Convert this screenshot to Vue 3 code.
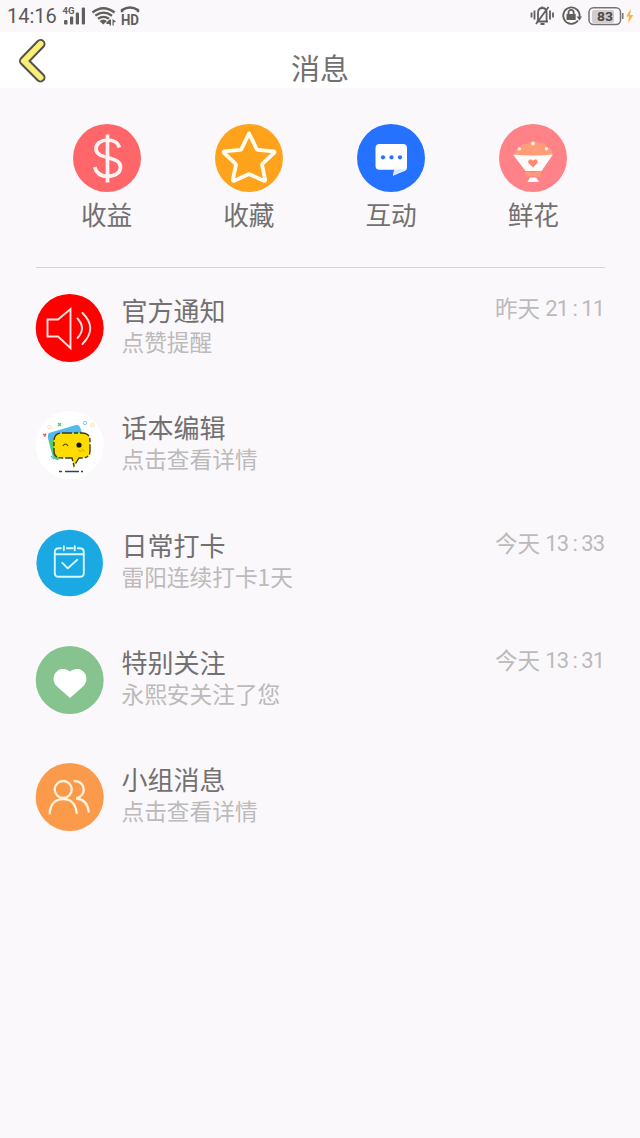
<script setup>
const shortcuts = [
  { id: 'income', label: '收益', color: '#ff6669' },
  { id: 'favorite', label: '收藏', color: '#ffa31c' },
  { id: 'interact', label: '互动', color: '#2472ff' },
  { id: 'flower', label: '鲜花', color: '#ff8288' },
]
const messages = [
  { id: 'notice', title: '官方通知', detail: '点赞提醒', day: '昨天', h: '21', m: '11', color: '#fe0000' },
  { id: 'editor', title: '话本编辑', detail: '点击查看详情', color: '#ffffff' },
  { id: 'daily', title: '日常打卡', detail: '雷阳连续打卡1天', day: '今天', h: '13', m: '33', color: '#1ba9e4' },
  { id: 'follow', title: '特别关注', detail: '永熙安关注了您', day: '今天', h: '13', m: '31', color: '#87c38f' },
  { id: 'group', title: '小组消息', detail: '点击查看详情', color: '#fb9a4b' },
]
</script>

<template>
  <div class="screen">
    <div class="status">
      <span class="clock">14:16</span>
      <svg class="status-left" width="80" height="32" viewBox="60 0 80 32">
        <text x="62.500" y="14" font-size="8.500" font-weight="700" textLength="12" lengthAdjust="spacingAndGlyphs" fill="#625e5e">4G</text>
        <g fill="#625e5e">
          <rect x="64" y="20" width="3.500" height="4.500" rx="1" />
          <rect x="70" y="16.500" width="3.200" height="8" rx="1" />
          <rect x="75.800" y="12.500" width="3.200" height="12" rx="1" />
          <rect x="81.800" y="7.500" width="3.200" height="17" rx="1" />
          <path d="M99.500 21 Q103.500 18 107 21 L103.300 24.500Z" />
          <path d="M111 19.500v6h-1.400v-1.600h-3.200v-1.400l3.200-3zM112.500 19v6.500h1.200v-3l2.300-1z" />
        </g>
        <g fill="none" stroke="#625e5e" stroke-width="2.300">
          <path d="M92.500 12.500Q103.500 4 114.500 12.500M95.300 15.700Q103.500 9.500 112 15.700M98 18.800Q103.500 15 109 18.800" />
          <path d="M122 12.300v-2.200Q130 5 138 10.100v2.200" stroke-width="2.500" />
        </g>
        <text x="121" y="24.800" font-size="14.500" font-weight="700" textLength="18" lengthAdjust="spacingAndGlyphs" fill="#625e5e">HD</text>
      </svg>
      <svg class="status-right" width="110" height="32" viewBox="530 0 110 32">
        <g fill="none" stroke="#625e5e" stroke-width="1.800">
          <path d="M531.500 12.500v5M534.500 10.500v9M550 10.500v9M553 12.500v5" />
          <path d="M536.500 21.500h11.500M538 21v-8q0-5 4.300-5t4.300 5v8M542.300 8V6.500M540.500 24h4M536 24L548.500 7" />
          <path d="M578 20.500A8.200 8.200 0 1 1 579.500 17" />
          <path d="M568.500 15v-2.500a2.600 2.600 0 0 1 5.200 0V15" />
        </g>
        <path d="M566.500 14h9.200v6h-9.200zM576.500 16.500h5.500l-2.500 4z" fill="#625e5e" />
        <rect x="592" y="10" width="22" height="13" rx="2" fill="#d1cecf" />
        <rect x="589" y="7.800" width="31.500" height="16.700" rx="4.500" fill="none" stroke="#777374" stroke-width="1.500" />
        <path d="M622 13h1.500v6H622z" fill="#777374" />
        <text x="597" y="21" font-size="13" font-weight="700" textLength="16" lengthAdjust="spacingAndGlyphs" fill="#4c4949">83</text>
        <path d="M631 8.500l-5 8h3l-1 7 5.300-8.500H630z" fill="#f4b945" />
      </svg>
    </div>

    <header class="header">
      <svg class="back" width="30" height="46" viewBox="0 0 30 46">
        <path d="M23.500 6L7 23 23.500 39.500" fill="none" stroke="#55524a" stroke-width="10" stroke-linecap="round" stroke-linejoin="round" />
        <path d="M23.500 6L7 23 23.500 39.500" fill="none" stroke="#f7ef79" stroke-width="6" stroke-linecap="round" stroke-linejoin="round" />
      </svg>
      <h1>消息</h1>
    </header>

    <nav class="shortcuts">
      <div v-for="s in shortcuts" :key="s.id" class="shortcut">
        <svg class="disc" viewBox="0 0 68 68">
          <circle cx="34" cy="34" r="34" :fill="s.color" />
          <g v-if="s.id === 'income'" fill="none" stroke="#fff3f1" stroke-width="3.700">
            <path d="M46.300 23.500C45 18.500 40 16 34.500 16c-6.500 0-11.500 3.500-11.500 8.700 0 11.500 24.500 6.500 24.500 18.300 0 5.800-5.500 9.300-12.500 9.300-7.500 0-12-3.800-13.300-9.300" />
            <path d="M34.500 10.500v48" />
          </g>
          <path v-else-if="s.id === 'favorite'" d="M34 9.500l7.600 15.300q.4.800 1.300 1l15.800 1.600q1.300.3.400 1.400L47.600 39.600q-.6.700-.5 1.600l3 14.500q.1 1.600-1.300 1L35 50.400q-1-.4-2 0l-13.800 6.300q-1.400.6-1.300-1l3-14.500q.1-.9-.5-1.600L9 28.800q-.9-1.100.4-1.400l15.800-1.600q.9-.2 1.300-1z" fill="none" stroke="#fffdf2" stroke-width="3.800" stroke-linejoin="round" />
          <g v-else-if="s.id === 'interact'">
            <path d="M22.500 20h23.500q4 0 4 4v18q0 4-1.500 4.500L36 51.800l1.200-6H22.500q-4 0-4-4V24q0-4 4-4z" fill="#fff" />
            <path d="M49.500 45L36 51.800l1.200-6z" fill="#d7e7ff" />
            <circle v-for="x in [26, 34.500, 43]" :key="x" :cx="x" cy="33.300" r="2.100" fill="#2472ff" />
          </g>
          <g v-else>
            <path d="M16 31q-1-6 5-7 2-5 7-4 5-5 12-1 6-1 8 4 6 1 5 8z" fill="#ff9d78" />
            <path d="M14 30.500q20 2 40 0L42.500 47h-16z" fill="#fffafa" />
            <path d="M34 43.500l-4.300-4.200c-2-3 2-5.500 4.300-2.600 2.300-2.900 6.300-.4 4.300 2.600z" fill="#ff8a74" />
            <path d="M26 48q4-1.500 8 1 4-2.500 8-1l-1 5-7-1-7 1z" fill="#ff9a78" />
            <path d="M31 53.500h6l3 4.500H28.500z" fill="#fff" />
            <g fill="#ffeee8"><circle cx="20.300" cy="24.700" r="1.700" /><circle cx="34" cy="19.500" r="1.900" /><circle cx="47.500" cy="24.700" r="1.700" /></g>
          </g>
        </svg>
        <span class="label">{{ s.label }}</span>
      </div>
    </nav>

    <main class="list">
      <article v-for="m in messages" :key="m.id" class="row">
        <svg class="disc" viewBox="0 0 68 68">
          <circle cx="33.700" cy="34" :r="m.id === 'daily' ? 33.3 : 34" :fill="m.color" />
          <g v-if="m.id === 'notice'" fill="none" stroke="#ffe3e0" stroke-width="1.900">
            <path d="M11.500 25.500h10.500L34.500 15v39L22 42.500H11.500z" />
            <path d="M41.500 24.500q9 9.500 0 19.500M46.500 19q15.500 15 0 31" stroke-linecap="round" />
          </g>
          <g v-else-if="m.id === 'editor'">
            <path d="M13 22L40 14q3-.5 4 2l3 8-28 24q-2-1-3-5l-4-16q-.5-4 1-5z" fill="#55b8ef" />
            <path d="M13 29L43 20l3 3-24 26q-4 0-5-4z" fill="#4dcc70" />
            <path d="M26 22h20q8 0 8 8v10q0 7-8 7h-3l-5 8-2-8H26q-8 0-8-7V30q0-8 8-8z" fill="#ffdc00" stroke="#3f3a17" stroke-width="1.400" stroke-dasharray="10 2 4 2" />
            <path d="M27 35q2.500-4 5 0" fill="none" stroke="#55470a" stroke-width="1.200" />
            <circle cx="43" cy="34" r="2.600" fill="#171510" />
            <path d="M42.500 39.500l3 1M45.500 38l3 2" stroke="#e38a22" stroke-width="1" />
            <path d="M23 60.500h3M29 60.500h14M45 60.500h2" stroke="#344149" stroke-width="1.300" />
            <path d="M7 23l3 2M10 22.500l-2 3" stroke="#ed6250" stroke-width="1.500" />
            <path d="M22 12l3 3M25 12l-3 3" stroke="#55c86f" stroke-width="1.300" />
            <path d="M15 45l3 3" stroke="#56b5ee" stroke-width="1.200" />
            <g fill="none" stroke-width="1"><circle cx="13.500" cy="16" r="1.800" stroke="#ffe59b" /><circle cx="49" cy="12" r="1.700" stroke="#83c9f6" /><circle cx="56.500" cy="14" r="1.600" stroke="#ffdf82" /></g>
          </g>
          <g v-else-if="m.id === 'daily'" transform="translate(-.7 -.7)" fill="none" stroke="#d5f6fc" stroke-width="1.900" stroke-linecap="round" stroke-linejoin="round">
            <path d="M25.500 20h-2q-4 0-4 4v21q0 3.500 4 3.500h21q4 0 4-3.500V24q0-4-4-4h-2M31.500 20h6M19.500 26h29M28.500 18v4M39.500 18v4" />
            <path d="M27 34.500l5.500 5.500L42 31.500" />
          </g>
          <path v-else-if="m.id === 'follow'" d="M34 52L21 40.500c-5-4.500-4.500-12.500 1-16 4-2.500 9-1.500 12 1 3-2.500 8-3.500 12-1 5.500 3.500 6 11.500 1 16z" fill="#fff" />
          <g v-else transform="translate(-.8 0)" fill="none" stroke="#fff3de" stroke-width="2.300" stroke-linecap="round">
            <circle cx="28" cy="26.500" r="8.500" />
            <path d="M14.500 50.500v-1c1-9 6.500-13.500 13.500-13.500s12.500 4.500 13.500 14M39.500 18c11 0 12.500 15 1.500 17.500 7 .5 11.500 5.500 12.500 13" />
          </g>
        </svg>
        <div class="body">
          <h2>{{ m.title }}</h2>
          <p>{{ m.detail }}</p>
        </div>
        <time v-if="m.day"><span>{{ m.day }}</span><span class="digits">{{ m.h }}<i>:</i>{{ m.m }}</span></time>
      </article>
    </main>
  </div>
</template>

<style>
body { background: #faf8fa; }
</style>

<style scoped>
.screen {
  height: 1138px;
  overflow: hidden;
  background: #faf8fa;
  color: #727071;
  font-family: "Noto Sans CJK SC", sans-serif;
  font-weight: 400;
}
svg { display: block; flex: none; }
.status {
  display: flex;
  height: 32px;
  font-family: Roboto, sans-serif;
}
.clock {
  width: 60px;
  box-sizing: border-box;
  padding-left: 7px;
  font-size: 20px;
  line-height: 33px;
  color: #5c5858;
}
.status-right { margin-left: auto; }
.header {
  display: grid;
  grid-template-columns: 60px 1fr 60px;
  height: 56px;
  background: #fff;
}
.back { margin: 6px 0 0 17px; }
h1 {
  margin: 0;
  text-align: center;
  font-size: 29px;
  font-weight: 400;
  line-height: 71px;
}
.shortcuts {
  display: grid;
  grid-template-columns: repeat(4, 1fr);
  box-sizing: border-box;
  height: 180px;
  margin: 0 35.500px;
  padding-top: 36px;
  border-bottom: 1px solid #d6d4d5;
}
.shortcut {
  display: flex;
  flex-direction: column;
  align-items: center;
}
.disc { width: 68px; height: 68px; flex: none; overflow: visible; }
.label { font-size: 25.700px; line-height: 43px; }
.list { padding: 26px 35.500px 0; }
.row {
  display: flex;
  align-items: flex-start;
  height: 117.300px;
}
.body { margin-left: 18px; }
h2 {
  margin: 0;
  font-size: 26px;
  font-weight: 400;
  line-height: 31px;
}
p {
  margin: 0;
  font-size: 22.700px;
  line-height: 33px;
  color: #bcbabb;
}
time {
  display: flex;
  gap: 5px;
  margin-left: auto;
  font-size: 22.600px;
  line-height: 27px;
  color: #bcbabb;
}
.digits {
  font-family: Roboto, "Noto Sans CJK SC", sans-serif;
  font-size: 22px;
  line-height: 29px;
  letter-spacing: -0.700px;
}
i { font-style: normal; padding: 0 4px; }
</style>
